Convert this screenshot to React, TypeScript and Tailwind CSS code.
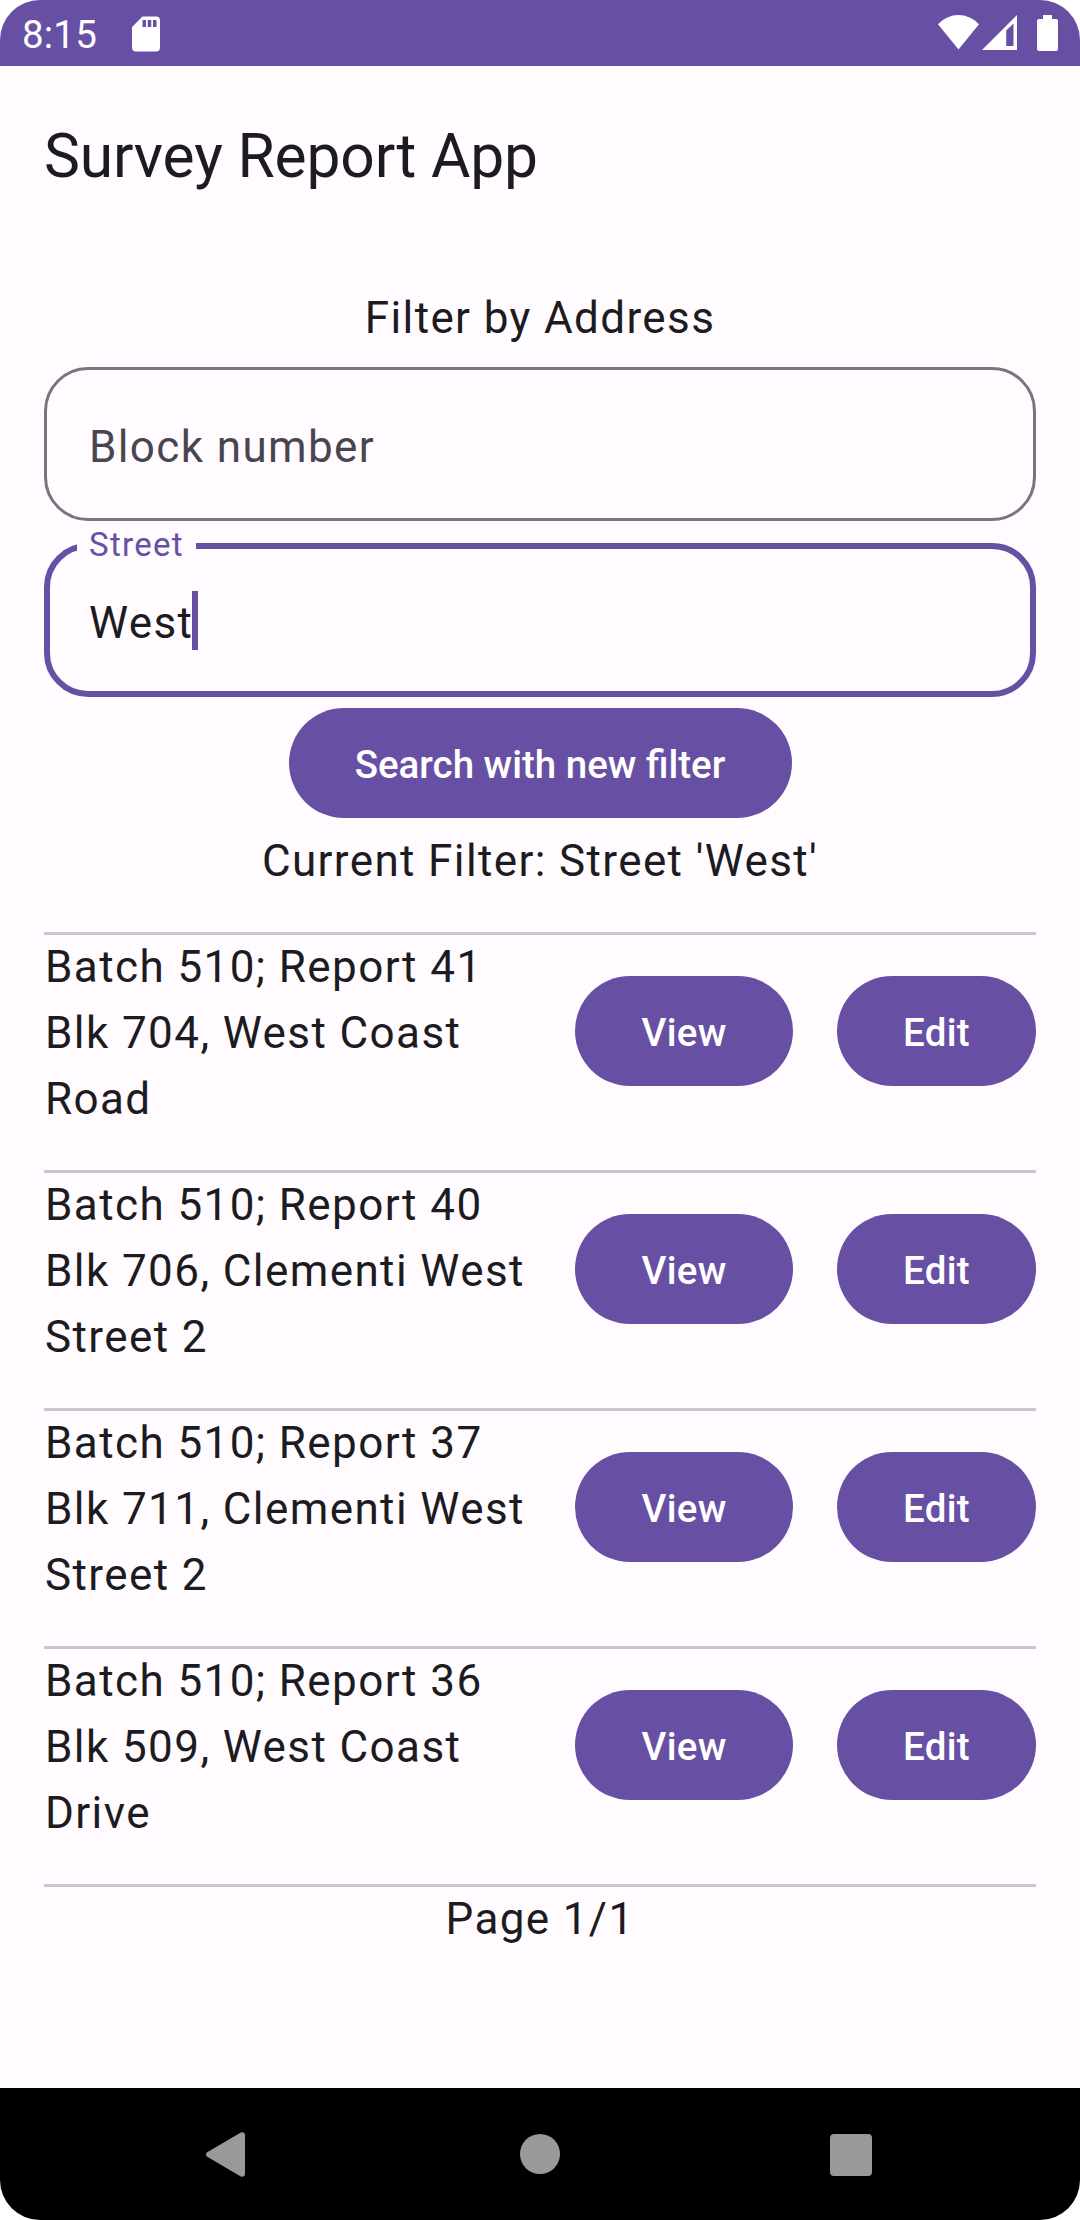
const reports = [
  { title: 'Batch 510; Report 41', address: 'Blk 704, West Coast Road' },
  { title: 'Batch 510; Report 40', address: 'Blk 706, Clementi West Street 2' },
  { title: 'Batch 510; Report 37', address: 'Blk 711, Clementi West Street 2' },
  { title: 'Batch 510; Report 36', address: 'Blk 509, West Coast Drive' },
];

function PillButton({ label, className }: { label: string; className: string }) {
  return (
    <button
      className={`flex h-[110px] shrink-0 items-center justify-center whitespace-nowrap rounded-full bg-[#6750a4] pt-[2px] text-[38.5px] font-medium leading-[55px] text-white ${className}`}
    >
      {label}
    </button>
  );
}

function StatusBar() {
  return (
    <header className="flex h-[66px] items-start justify-between bg-[#6750a4] pl-[22px] pr-[22px] text-white">
      <div className="flex">
        <span className="w-[103px] pt-[12px] text-[38.5px] leading-[45px] tracking-[0.2px]">8:15</span>
        <svg className="mt-[12.5px] h-[42px] w-[42px]" viewBox="0 0 24 24" fill="currentColor">
          <path d="M18 2h-8L4.02 8 4 20c0 1.1.9 2 2 2h12c1.1 0 2-.9 2-2V4c0-1.1-.9-2-2-2zm-6 6h-2V4h2v4zm3 0h-2V4h2v4zm3 0h-2V4h2v4z" />
        </svg>
      </div>
      <div className="flex pt-[15px]">
        <svg className="h-[36px] w-[41px]" viewBox="0 0 41 36" fill="currentColor">
          <path d="M0 9.3C5.8 3.4 12.8 0 20.5 0S35.2 3.4 41 9.3L20.5 34.5Z" />
        </svg>
        <svg className="ml-[3px] h-[36px] w-[35px]" viewBox="0 0 35 36" fill="currentColor">
          <path fillRule="evenodd" d="M35 0V35H0ZM24.2 15.500V31H31.500V8.500Z" />
        </svg>
        <svg className="ml-[20px] h-[36px] w-[21px]" viewBox="0 0 21 36" fill="currentColor">
          <path d="M6 0h9v4h4a2 2 0 0 1 2 2v28a2 2 0 0 1-2 2H2a2 2 0 0 1-2-2V6a2 2 0 0 1 2-2h4Z" />
        </svg>
      </div>
    </header>
  );
}

function NavigationBar() {
  return (
    <nav className="flex h-[132px] items-start bg-black pl-[206px] pt-[44px] text-[#999999]">
      <svg className="h-[45px] w-[39px]" viewBox="0 0 39 45" fill="currentColor">
        <path d="M1.2 20.200 34.800 .5Q38.800-.8 39 3.500V41.500Q38.800 45.800 34.800 44.500L1.200 24.800Q-1.200 22.500 1.200 20.200Z" />
      </svg>
      <div className="ml-[275px] mt-[2px] size-[40px] rounded-full bg-[#999999]" />
      <div className="ml-[270px] mt-[2px] h-[42px] w-[41.5px] rounded-[4px] bg-[#999999]" />
    </nav>
  );
}

export default function App() {
  return (
    <div className="bg-white">
      <div className="flex h-[2220px] w-[1080px] flex-col overflow-hidden rounded-[40px] bg-[#fffbfe] font-[Roboto,sans-serif] text-[44px] leading-[66px] tracking-[1.375px] text-[#1c1b1f]">
        <div className="tracking-normal">
          <StatusBar />
          <h1 className="h-[176px] px-[44px] pt-[52px] text-[60.5px] leading-[77px] tracking-[-0.16px]">
            Survey Report App
          </h1>
        </div>
        <main className="flex flex-1 flex-col items-center px-[44px] pt-[43px]">
          <h2>Filter by Address</h2>
          <div className="mt-[16px] flex h-[154px] w-full items-center rounded-[44px] border-[3px] border-[#79747e] pl-[42px] pt-[6px] text-[#49454f]">
            Block number
          </div>
          <div className="relative mt-[22px] flex h-[154px] w-full items-center rounded-[44px] border-[6px] border-[#6750a4] pl-[39px]">
            <span className="absolute -top-[26px] left-[27px] w-[119px] bg-[#fffbfe] pl-[12px] text-[33px] leading-[44px] tracking-[1.3px] text-[#6750a4]">
              Street
            </span>
            <span className="pt-[6px]">West</span>
            <span className="-ml-px h-[59px] w-[5.5px] bg-[#6750a4]" />
          </div>
          <PillButton label="Search with new filter" className="mt-[11px] w-[503px] tracking-normal" />
          <p className="mt-[10px]">Current Filter: Street 'West'</p>
          <ul className="mt-[38px] w-full border-b-[3px] border-[#cac4d0]">
            {reports.map((r) => (
              <li key={r.title} className="flex h-[238px] border-t-[3px] border-[#cac4d0]">
                <div className="-mt-px flex-1 pl-px pr-[30px] tracking-[1.41px]">
                  <p>{r.title}</p>
                  <p>{r.address}</p>
                </div>
                <div className="flex gap-[44px] pt-[41px]">
                  <PillButton label="View" className="w-[218px] tracking-[0.275px]" />
                  <PillButton label="Edit" className="w-[199px] tracking-[0.275px]" />
                </div>
              </li>
            ))}
          </ul>
          <p className="-mt-px">Page 1/1</p>
        </main>
        <NavigationBar />
      </div>
    </div>
  );
}
